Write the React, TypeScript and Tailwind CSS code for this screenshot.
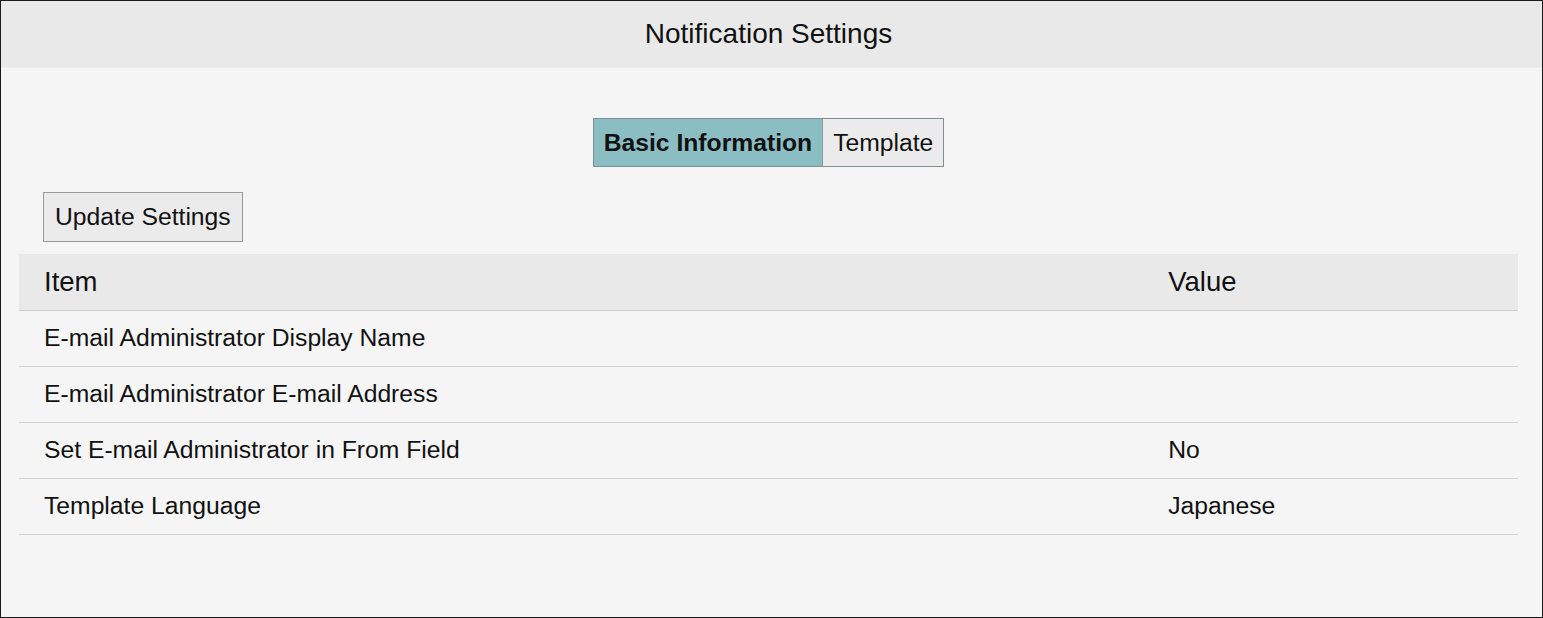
const rows = [
  { item: "E-mail Administrator Display Name", value: "" },
  { item: "E-mail Administrator E-mail Address", value: "" },
  { item: "Set E-mail Administrator in From Field", value: "No" },
  { item: "Template Language", value: "Japanese" },
];

export default function App() {
  return (
    <div className="h-[618px] overflow-hidden border border-[#1a1a1a] bg-[#f5f5f5] font-['Liberation_Sans',Arial,sans-serif] text-[#111]">
      <div className="flex h-[67px] items-center justify-center border-b border-[#ededed] bg-[#e9e9e9] pr-[6px] text-[28px]">
        Notification Settings
      </div>

      <div className="pl-[18px] pr-[24px]">
        <div className="mt-[50px] flex justify-center">
          <div className="flex h-[49px] border border-[#7d8f91] text-[24.7px]">
            <button className="bg-[#8bbec3] px-[10px] font-bold">
              Basic Information
            </button>
            <button className="border-l border-[#8f9a9b] bg-[#ebebeb] px-[10px]">
              Template
            </button>
          </div>
        </div>

        <button className="mt-[25px] ml-[24px] h-[50px] border border-[#999] bg-[#ebebeb] px-[11px] text-[24.7px]">
          Update Settings
        </button>

        <table className="mt-[12px] w-full border-collapse text-left">
          <thead>
            <tr className="h-[56px] border-b border-[#cfcfcf] bg-[#e9e9e9] text-[27.5px]">
              <th className="w-3/4 pl-[25px] font-normal">Item</th>
              <th className="pl-[25px] font-normal">Value</th>
            </tr>
          </thead>
          <tbody className="text-[24.7px]">
            {rows.map((r) => (
              <tr key={r.item} className="h-[56px] border-b border-[#d4d4d4]">
                <td className="pl-[25px]">{r.item}</td>
                <td className="pl-[25px]">{r.value}</td>
              </tr>
            ))}
          </tbody>
        </table>
      </div>
    </div>
  );
}
